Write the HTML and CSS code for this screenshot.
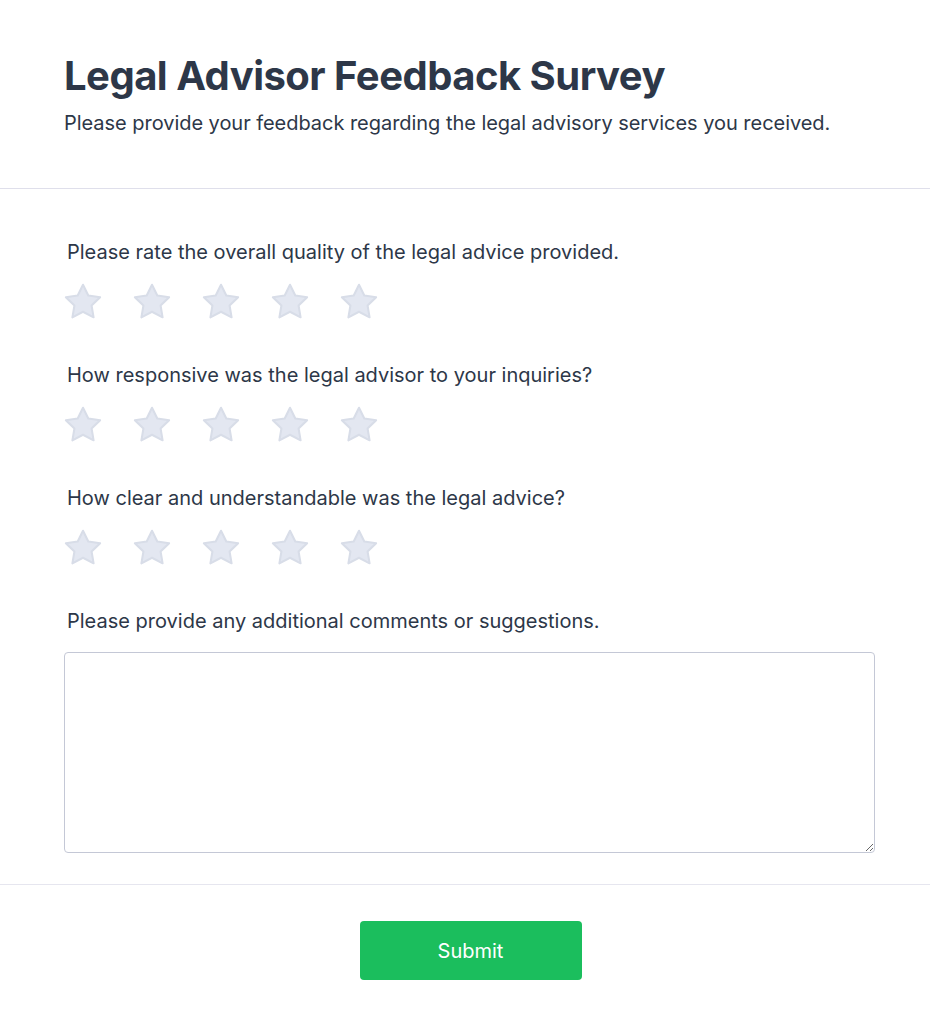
FILE: index.html
```html
<!DOCTYPE html>
<html lang="en">
<head>
<meta charset="utf-8">
<title>Legal Advisor Feedback Survey</title>
<link rel="stylesheet" href="styles.css">
</head>
<body>
<div class="survey">
  <header class="survey-header">
    <h1 class="title">Legal Advisor Feedback Survey</h1>
    <p class="subtitle">Please provide your feedback regarding the legal advisory services you received.</p>
  </header>
  <main class="survey-body">
    <div class="question">
      <label class="q-label">Please rate the overall quality of the legal advice provided.</label>
      <div class="stars">
        <svg class="star" viewBox="1 1 22 21"><polygon points="12 2 15.09 8.26 22 9.27 17 14.14 18.18 21.02 12 17.77 5.82 21.02 7 14.14 2 9.27 8.91 8.26 12 2"/></svg>
        <svg class="star" viewBox="1 1 22 21"><polygon points="12 2 15.09 8.26 22 9.27 17 14.14 18.18 21.02 12 17.77 5.82 21.02 7 14.14 2 9.27 8.91 8.26 12 2"/></svg>
        <svg class="star" viewBox="1 1 22 21"><polygon points="12 2 15.09 8.26 22 9.27 17 14.14 18.18 21.02 12 17.77 5.82 21.02 7 14.14 2 9.27 8.91 8.26 12 2"/></svg>
        <svg class="star" viewBox="1 1 22 21"><polygon points="12 2 15.09 8.26 22 9.27 17 14.14 18.18 21.02 12 17.77 5.82 21.02 7 14.14 2 9.27 8.91 8.26 12 2"/></svg>
        <svg class="star" viewBox="1 1 22 21"><polygon points="12 2 15.09 8.26 22 9.27 17 14.14 18.18 21.02 12 17.77 5.82 21.02 7 14.14 2 9.27 8.91 8.26 12 2"/></svg>
      </div>
    </div>
    <div class="question">
      <label class="q-label">How responsive was the legal advisor to your inquiries?</label>
      <div class="stars">
        <svg class="star" viewBox="1 1 22 21"><polygon points="12 2 15.09 8.26 22 9.27 17 14.14 18.18 21.02 12 17.77 5.82 21.02 7 14.14 2 9.27 8.91 8.26 12 2"/></svg>
        <svg class="star" viewBox="1 1 22 21"><polygon points="12 2 15.09 8.26 22 9.27 17 14.14 18.18 21.02 12 17.77 5.82 21.02 7 14.14 2 9.27 8.91 8.26 12 2"/></svg>
        <svg class="star" viewBox="1 1 22 21"><polygon points="12 2 15.09 8.26 22 9.27 17 14.14 18.18 21.02 12 17.77 5.82 21.02 7 14.14 2 9.27 8.91 8.26 12 2"/></svg>
        <svg class="star" viewBox="1 1 22 21"><polygon points="12 2 15.09 8.26 22 9.27 17 14.14 18.18 21.02 12 17.77 5.82 21.02 7 14.14 2 9.27 8.91 8.26 12 2"/></svg>
        <svg class="star" viewBox="1 1 22 21"><polygon points="12 2 15.09 8.26 22 9.27 17 14.14 18.18 21.02 12 17.77 5.82 21.02 7 14.14 2 9.27 8.91 8.26 12 2"/></svg>
      </div>
    </div>
    <div class="question">
      <label class="q-label">How clear and understandable was the legal advice?</label>
      <div class="stars">
        <svg class="star" viewBox="1 1 22 21"><polygon points="12 2 15.09 8.26 22 9.27 17 14.14 18.18 21.02 12 17.77 5.82 21.02 7 14.14 2 9.27 8.91 8.26 12 2"/></svg>
        <svg class="star" viewBox="1 1 22 21"><polygon points="12 2 15.09 8.26 22 9.27 17 14.14 18.18 21.02 12 17.77 5.82 21.02 7 14.14 2 9.27 8.91 8.26 12 2"/></svg>
        <svg class="star" viewBox="1 1 22 21"><polygon points="12 2 15.09 8.26 22 9.27 17 14.14 18.18 21.02 12 17.77 5.82 21.02 7 14.14 2 9.27 8.91 8.26 12 2"/></svg>
        <svg class="star" viewBox="1 1 22 21"><polygon points="12 2 15.09 8.26 22 9.27 17 14.14 18.18 21.02 12 17.77 5.82 21.02 7 14.14 2 9.27 8.91 8.26 12 2"/></svg>
        <svg class="star" viewBox="1 1 22 21"><polygon points="12 2 15.09 8.26 22 9.27 17 14.14 18.18 21.02 12 17.77 5.82 21.02 7 14.14 2 9.27 8.91 8.26 12 2"/></svg>
      </div>
    </div>
    <div class="question last">
      <label class="q-label">Please provide any additional comments or suggestions.</label>
      <textarea class="comments"></textarea>
    </div>
  </main>
  <footer class="survey-footer">
    <button class="submit" type="button">Submit</button>
  </footer>
</div>
</body>
</html>
```

FILE: styles.css
```css
* { box-sizing: border-box; }
html, body {
  margin: 0;
  padding: 0;
  background: #ffffff;
}
body {
  font-family: "Inter", "Noto Sans", sans-serif;
  color: #2d3748;
}
.survey {
  width: 930px;
}
.survey-header {
  padding: 50px 55px 50px 64px;
  border-bottom: 1px solid #dfdfeb;
}
.title {
  margin: 0 0 6px 0;
  font-size: 40px;
  line-height: 52px;
  font-weight: 700;
  letter-spacing: -0.52px;
  color: #2d3748;
}
.subtitle {
  margin: 0;
  font-size: 20px;
  line-height: 30px;
  font-weight: 400;
  letter-spacing: -0.04px;
  color: #2d3748;
}
.survey-body {
  padding: 48px 55px 31px 64px;
  border-bottom: 1px solid #e6e6ef;
}
.question {
  display: flex;
  flex-direction: column;
  margin-bottom: 41px;
}
.question.last { margin-bottom: 0; }
.q-label {
  display: block;
  font-size: 20px;
  line-height: 30px;
  font-weight: 400;
  color: #2d3748;
  padding-left: 3px;
  margin-bottom: 16px;
}
.stars {
  display: flex;
  gap: 31px;
}
.star {
  width: 38px;
  height: 36px;
  display: block;
}
.star polygon {
  fill: #e3e7f1;
  stroke: #d8dde8;
  stroke-width: 1.2;
  stroke-linejoin: round;
}
.comments {
  display: block;
  width: 100%;
  height: 201px;
  border: 1px solid #c4c8d6;
  border-radius: 4px;
  resize: vertical;
  font-family: inherit;
  font-size: 16px;
  padding: 8px;
}
.survey-footer {
  display: flex;
  justify-content: center;
  padding: 36px 54px 50px 65px;
}
.submit {
  width: 222px;
  height: 59px;
  background: #1bbe5d;
  color: #ffffff;
  border: none;
  border-radius: 4px;
  font-family: inherit;
  font-size: 20px;
  font-weight: 400;
  cursor: pointer;
}
```
